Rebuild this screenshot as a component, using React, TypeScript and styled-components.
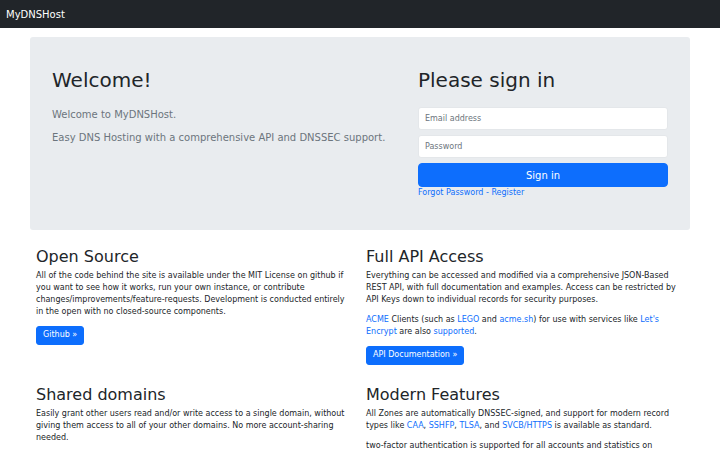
import React from "react";
import styled, { createGlobalStyle } from "styled-components";

const GlobalStyle = createGlobalStyle`
  html, body { margin: 0; padding: 0; background: #fff; }
  body {
    font-family: "DejaVu Sans", "Liberation Sans", sans-serif;
    font-size: 8px;
    line-height: 12px;
    color: #212529;
  }
  * { box-sizing: border-box; }
`;

const Navbar = styled.nav`
  height: 28px;
  background: #212529;
  display: flex;
  align-items: center;
  padding: 0 6px;
  margin-bottom: 9px;
`;

const Brand = styled.a`
  color: #fff;
  font-size: 10px;
  line-height: 15px;
  text-decoration: none;
`;

const Container = styled.div`
  width: 660px;
  margin: 0 auto;
`;

const Jumbotron = styled.section`
  background: #e9ecef;
  border-radius: 3px;
  padding: 31px 22px;
  display: grid;
  grid-template-columns: 1fr 250px;
  column-gap: 12px;
  align-items: start;
`;

const Display = styled.h1`
  font-size: 20px;
  line-height: 24px;
  font-weight: 400;
  margin: 0 0 15px;
  color: #212529;
`;

const Lead = styled.p`
  font-size: 10px;
  line-height: 15px;
  color: #6c757d;
  margin: 0 0 8px;
`;

const SignInForm = styled.form`
  display: flex;
  flex-direction: column;
`;

const Input = styled.input`
  height: 23px;
  margin-bottom: 5px;
  padding: 0 6px;
  font-family: inherit;
  font-size: 8px;
  color: #212529;
  background: #fff;
  border: 1px solid #e4e7ea;
  border-radius: 3px;
  outline: none;
  &::placeholder { color: #6c757d; }
`;

const SignInButton = styled.button`
  height: 24px;
  font-family: inherit;
  font-size: 10px;
  line-height: 15px;
  color: #fff;
  background: #0d6efd;
  border: 1px solid #0d6efd;
  border-radius: 4px;
  cursor: pointer;
`;

const FormLinks = styled.div`
  line-height: 12px;
  color: #0d6efd;
`;

const Link = styled.a`
  color: #0d6efd;
  text-decoration: none;
`;

const Features = styled.div`
  margin-top: 16.5px;
  padding: 0 6px;
  display: grid;
  grid-template-columns: 1fr 1fr;
  column-gap: 12px;
  row-gap: 12px;
  align-items: start;
`;

const Feature = styled.div``;

const FeatureTitle = styled.h2`
  font-size: 16px;
  line-height: 19.2px;
  font-weight: 400;
  margin: 0 0 4px;
  color: #212529;
`;

const Para = styled.p`
  margin: 0 0 8px;
`;

const ActionButton = styled.a`
  display: inline-block;
  padding: 2.5px 6px;
  font-size: 8px;
  line-height: 12px;
  color: #fff;
  background: #0d6efd;
  border: 1px solid #0d6efd;
  border-radius: 3px;
  text-decoration: none;
`;

export default function App() {
  return (
    <>
      <GlobalStyle />
      <Navbar>
        <Brand href="#">MyDNSHost</Brand>
      </Navbar>
      <Container>
        <Jumbotron>
          <div>
            <Display>Welcome!</Display>
            <Lead>Welcome to MyDNSHost.</Lead>
            <Lead>Easy DNS Hosting with a comprehensive API and DNSSEC support.</Lead>
          </div>
          <div>
            <Display>Please sign in</Display>
            <SignInForm onSubmit={(e) => e.preventDefault()}>
              <Input type="email" placeholder="Email address" />
              <Input type="password" placeholder="Password" />
              <SignInButton type="submit">Sign in</SignInButton>
              <FormLinks>
                <Link href="#">Forgot Password</Link> - <Link href="#">Register</Link>
              </FormLinks>
            </SignInForm>
          </div>
        </Jumbotron>
        <Features>
          <Feature>
            <FeatureTitle>Open Source</FeatureTitle>
            <Para>
              All of the code behind the site is available under the MIT License on github if you want to see how it works, run your own instance, or contribute changes/improvements/feature-requests. Development is conducted entirely in the open with no closed-source components.
            </Para>
            <Para>
              <ActionButton href="#">Github »</ActionButton>
            </Para>
          </Feature>
          <Feature>
            <FeatureTitle>Full API Access</FeatureTitle>
            <Para>
              Everything can be accessed and modified via a comprehensive JSON-Based REST API, with full documentation and examples. Access can be restricted by API Keys down to individual records for security purposes.
            </Para>
            <Para>
              <Link href="#">ACME</Link> Clients (such as <Link href="#">LEGO</Link> and <Link href="#">acme.sh</Link>) for use with services like <Link href="#">Let's Encrypt</Link> are also <Link href="#">supported</Link>.
            </Para>
            <Para>
              <ActionButton href="#">API Documentation »</ActionButton>
            </Para>
          </Feature>
          <Feature>
            <FeatureTitle>Shared domains</FeatureTitle>
            <Para>
              Easily grant other users read and/or write access to a single domain, without giving them access to all of your other domains. No more account-sharing needed.
            </Para>
          </Feature>
          <Feature>
            <FeatureTitle>Modern Features</FeatureTitle>
            <Para>
              All Zones are automatically DNSSEC-signed, and support for modern record types like <Link href="#">CAA</Link>, <Link href="#">SSHFP</Link>, <Link href="#">TLSA</Link>, and <Link href="#">SVCB/HTTPS</Link> is available as standard.
            </Para>
            <Para>
              two-factor authentication is supported for all accounts and statistics on
            </Para>
          </Feature>
        </Features>
      </Container>
    </>
  );
}
